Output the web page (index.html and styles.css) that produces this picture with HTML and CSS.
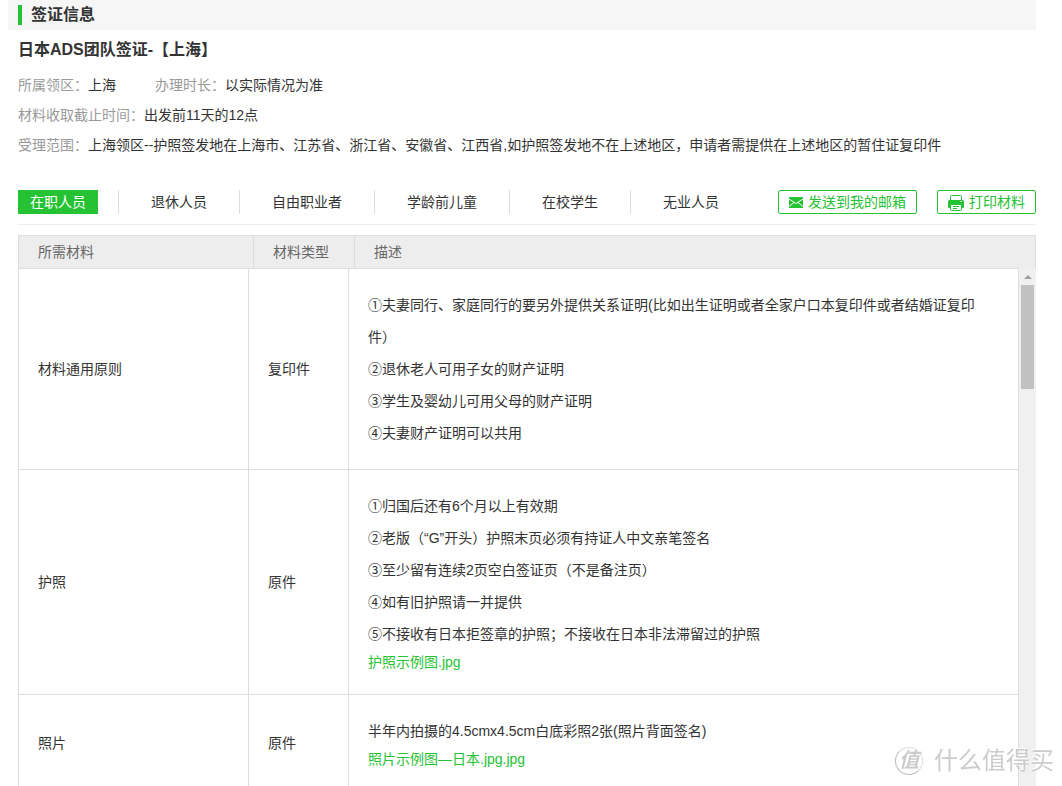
FILE: index.html
```html
<!DOCTYPE html>
<html lang="zh-CN">
<head>
<meta charset="utf-8">
<title>签证信息</title>
<link rel="stylesheet" href="styles.css">
</head>
<body>
<main class="page">
  <h1 class="section-title">签证信息</h1>
  <div class="content">
    <h2 class="product">日本ADS团队签证-【上海】</h2>
    <dl class="info">
      <div class="info-row">
        <div class="info-item"><dt>所属领区：</dt><dd>上海</dd></div>
        <div class="info-item"><dt>办理时长：</dt><dd>以实际情况为准</dd></div>
      </div>
      <div class="info-row">
        <div class="info-item"><dt>材料收取截止时间：</dt><dd>出发前11天的12点</dd></div>
      </div>
      <div class="info-row">
        <div class="info-item"><dt>受理范围：</dt><dd>上海领区--护照签发地在上海市、江苏省、浙江省、安徽省、江西省,如护照签发地不在上述地区，申请者需提供在上述地区的暂住证复印件</dd></div>
      </div>
    </dl>

    <div class="toolbar">
      <ul class="tabs">
        <li><button type="button" class="tab active">在职人员</button></li>
        <li><button type="button" class="tab">退休人员</button></li>
        <li><button type="button" class="tab">自由职业者</button></li>
        <li><button type="button" class="tab">学龄前儿童</button></li>
        <li><button type="button" class="tab">在校学生</button></li>
        <li><button type="button" class="tab">无业人员</button></li>
      </ul>
      <div class="actions">
        <button type="button" class="action">
          <svg class="icon-mail" viewBox="0 0 14 11" aria-hidden="true">
            <path fill="#25c233" d="M0 0h14v11H0z"/>
            <path fill="none" stroke="#fff" d="M0 2l7 4.500L14 2M0 9.500l5-4M14 9.500l-5-4"/>
          </svg>
          发送到我的邮箱
        </button>
        <button type="button" class="action">
          <svg class="icon-print" viewBox="0 0 16 16" aria-hidden="true">
            <path fill="#fff" stroke="#25c233" d="M2.5 6V1.5Q2.5.5 3.5.5h9q1 0 1 1V6"/>
            <path fill="#25c233" d="M1.5 5h13Q16 5 16 6.500V12q0 1-1 1H1q-1 0-1-1V6.500Q0 5 1.500 5z"/>
            <path fill="#fff" d="M12 6h2v1h-2z"/>
            <path fill="#fff" stroke="#25c233" d="M2.500 9.500h11v5q0 1-1 1h-9q-1 0-1-1z"/>
            <path stroke="#25c233" d="M5 11.500h6M5 13.500h4"/>
          </svg>
          打印材料
        </button>
      </div>
    </div>

    <div class="materials">
      <table class="head">
        <colgroup><col class="head-name"><col class="head-type"><col></colgroup>
        <thead><tr><th scope="col">所需材料</th><th scope="col">材料类型</th><th scope="col">描述</th></tr></thead>
      </table>
      <div class="scroller">
        <div class="viewport">
          <table class="list">
            <colgroup><col class="list-name"><col class="list-type"><col></colgroup>
            <tbody>
              <tr>
                <td>材料通用原则</td>
                <td>复印件</td>
                <td>
                  <p>①夫妻同行、家庭同行的要另外提供关系证明(比如出生证明或者全家户口本复印件或者结婚证复印件）</p>
                  <p>②退休老人可用子女的财产证明</p>
                  <p>③学生及婴幼儿可用父母的财产证明</p>
                  <p>④夫妻财产证明可以共用</p>
                </td>
              </tr>
              <tr>
                <td>护照</td>
                <td>原件</td>
                <td>
                  <p>①归国后还有6个月以上有效期</p>
                  <p>②老版（“G”开头）护照末页必须有持证人中文亲笔签名</p>
                  <p>③至少留有连续2页空白签证页（不是备注页）</p>
                  <p>④如有旧护照请一并提供</p>
                  <p>⑤不接收有日本拒签章的护照；不接收在日本非法滞留过的护照</p>
                  <a href="#">护照示例图.jpg</a>
                </td>
              </tr>
              <tr>
                <td>照片</td>
                <td>原件</td>
                <td>
                  <p>半年内拍摄的4.5cmx4.5cm白底彩照2张(照片背面签名)</p>
                  <a href="#">照片示例图—日本.jpg.jpg</a>
                </td>
              </tr>
            </tbody>
          </table>
        </div>
        <div class="scrollbar">
          <span class="arrow"></span>
          <span class="thumb"></span>
        </div>
      </div>
    </div>
  </div>
</main>
<div class="watermark"><span class="seal">值</span><span>什么值得买</span></div>
</body>
</html>
```
FILE: styles.css
```css
* {
  box-sizing: border-box;
}

body {
  margin: 0;
  background: #fff;
  color: #333;
  font: 14px/24px "Liberation Sans", "Noto Sans CJK SC", sans-serif;
}

h1, h2, p, ul, dl, dd {
  margin: 0;
  padding: 0;
}

button {
  font: inherit;
  cursor: pointer;
}

.page {
  display: flex;
  flex-direction: column;
  height: 100vh;
  padding: 0 26px 0 8px;
  overflow: hidden;
}

.section-title {
  display: flex;
  align-items: center;
  gap: 9px;
  flex: none;
  height: 30px;
  padding-left: 10px;
  background: #f6f6f6;
  font-size: 16px;
}

.section-title::before {
  content: "";
  width: 4px;
  height: 20px;
  background: #25c233;
}

.content {
  display: flex;
  flex: 1;
  flex-direction: column;
  min-height: 0;
  padding-left: 10px;
}

.product {
  font-size: 16px;
  line-height: 40px;
}

.info-row {
  display: flex;
  gap: 39px;
  line-height: 30px;
}

.info-item {
  display: flex;
}

.info dt {
  flex: none;
  color: #999;
}

.toolbar {
  display: flex;
  justify-content: space-between;
  margin-top: 30px;
  padding-bottom: 10px;
  border-bottom: 1px solid #eee;
}

.tabs {
  display: flex;
  list-style: none;
}

.tabs li {
  padding: 0 20px;
  border-left: 1px solid #ddd;
}

.tabs li:first-child {
  padding-left: 0;
  border-left: 0;
}

.tab {
  height: 24px;
  padding: 0 12px;
  border: 0;
  background: none;
  color: #333;
  white-space: nowrap;
}

.tab.active {
  background: #25c233;
  color: #fff;
}

.actions {
  display: flex;
  gap: 20px;
}

.action {
  display: flex;
  align-items: center;
  gap: 5px;
  height: 24px;
  padding: 0 10px;
  border: 1px solid #25c233;
  border-radius: 2px;
  background: #fff;
  color: #25c233;
  white-space: nowrap;
}

.icon-mail {
  width: 14px;
  height: 11px;
}

.icon-print {
  width: 16px;
  height: 16px;
  margin-top: 2px;
}

.materials {
  display: flex;
  flex: 1;
  flex-direction: column;
  min-height: 0;
  margin-top: 10px;
}

table {
  width: 100%;
  border-collapse: separate;
  border-spacing: 0;
  table-layout: fixed;
}

.head {
  flex: none;
  border: 1px solid #ddd;
  border-bottom: 0;
  background: #ededed;
}

.head-name {
  width: 235px;
}

.head-type {
  width: 101px;
}

.head th {
  height: 32px;
  padding: 0 19px;
  border-right: 1px solid #ddd;
  color: #666;
  font-weight: normal;
  text-align: left;
}

.head th:last-child {
  border-right: 0;
}

.scroller {
  display: flex;
  flex: 1;
  min-height: 0;
}

.viewport {
  flex: 1;
  min-width: 0;
  overflow: hidden;
}

.list {
  border-top: 1px solid #ddd;
  border-left: 1px solid #ddd;
}

.list-name {
  width: 230px;
}

.list-type {
  width: 100px;
}

.list td {
  padding: 20px 19px;
  border-right: 1px solid #ddd;
  border-bottom: 1px solid #ddd;
}

.list td:last-child {
  padding-right: 30px;
}

.list p {
  line-height: 32px;
}

.list a {
  display: block;
  color: #25c233;
  text-decoration: none;
}

.scrollbar {
  display: flex;
  flex: none;
  flex-direction: column;
  align-items: center;
  gap: 6px;
  width: 17px;
  padding-top: 7px;
  background: #f0f0f0;
}

.arrow {
  border: 4px solid transparent;
  border-top: 0;
  border-bottom-color: #a0a0a0;
}

.thumb {
  width: 13px;
  height: 104px;
  background: #c1c1c1;
}

.watermark {
  position: fixed;
  right: 8px;
  bottom: 10px;
  display: flex;
  align-items: center;
  gap: 11px;
  color: #ccc;
  font-size: 24px;
  line-height: 30px;
  text-shadow: -1px -1px 0 #fff;
  pointer-events: none;
}

.seal {
  width: 28px;
  height: 28px;
  border: 1px solid #ddd;
  border-bottom-color: #bbb;
  border-left-color: #bbb;
  border-radius: 50%;
  font-size: 20px;
  font-style: italic;
  font-weight: bold;
  line-height: 24px;
  text-align: center;
}
```
